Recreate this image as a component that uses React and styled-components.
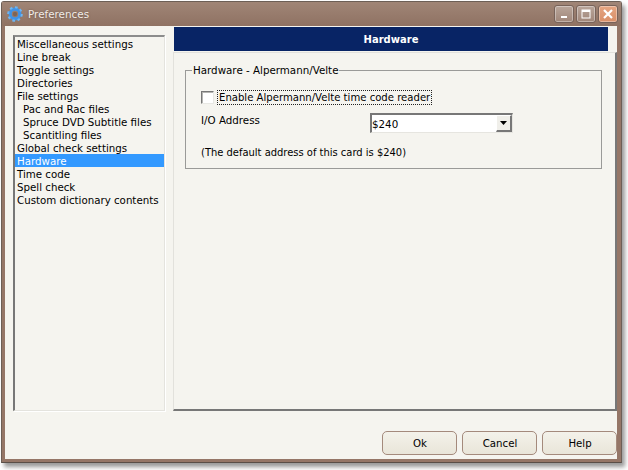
import React from 'react';
import styled, { createGlobalStyle } from 'styled-components';

const Global = createGlobalStyle`
  html, body { margin: 0; padding: 0; background: #fff; overflow: hidden; }
  body { width: 628px; height: 470px; font-family: "DejaVu Sans", sans-serif; }
  * { box-sizing: border-box; }
`;
const Page = styled.div`
  width: 628px; height: 470px; padding: 1px 0 0 1px;
`;
const Window = styled.div`
  width: 621px; height: 462px;
  display: flex; flex-direction: column;
  border: 1px solid #6d5f56;
  border-bottom: 1px solid #5a4f48;
  border-radius: 3px 3px 0 0;
  background: #957667;
  box-shadow: 3px 4px 4px rgba(70,70,70,.55);
`;
const TitleBar = styled.div`
  height: 24px; flex: none;
  display: flex; align-items: center;
  padding: 0 3px 0 5px;
  background: linear-gradient(#a08576, #8f7263);
`;
const AppIcon = styled.svg`width: 16px; height: 16px; flex: none;`;
const Title = styled.div`
  margin-left: 5px; flex: 1;
  font: 10.4px "DejaVu Sans", sans-serif; color: #f1ece8;
  text-shadow: 0 0 2px rgba(60,40,30,.5);
`;
const CaptionBtn = styled.div`
  width: 20px; height: 18px; margin-left: 2px;
  border: 1px solid #78635a; border-radius: 3px;
  display: flex; align-items: center; justify-content: center;
  background: ${p => p.$close ? 'linear-gradient(#e5a582,#d98f68)' : 'linear-gradient(#b9a69b,#a08679)'};
  box-shadow: inset 0 0 0 1px rgba(255,255,255,.35);
`;
const Client = styled.div`
  flex: 1; margin: 0 4px 3px 3px;
  background: #f5f4ef;
  display: flex; flex-direction: column;
  min-height: 0;
`;
const Main = styled.div`
  height: 385px; flex: none;
  display: flex;
`;
const ListBox = styled.ul`
  list-style: none; margin: 9px 0 0 8px; padding: 0;
  width: 152px; height: 376px; flex: none;
  border: 2px solid #8a8a8a;
  border-right: 1px solid #e4e3de; border-bottom: 1px solid #e4e3de;
  border-left-color: #777; border-top-color: #8c8c8c;
  background: #f5f4ef;
  box-shadow: 1px 1px 0 #fff;
`;
const Item = styled.li`
  height: 13px; line-height: 14px; font-size: 10.25px; white-space: nowrap;
  padding-left: ${p => p.$sub ? 8 : 2}px;
  color: ${p => p.$active ? '#fff' : '#000'};
  background: ${p => p.$active ? '#3399ff' : 'transparent'};
`;
const Right = styled.div`
  margin-left: 8px; flex: 1;
  display: flex; flex-direction: column;
  padding-top: 1px;
`;
const Heading = styled.div`
  height: 24px; flex: none; margin: 0 9px 0 1px;
  background: #082465; color: #fff;
  font-weight: bold; font-size: 10px;
  display: flex; align-items: center; justify-content: center;
`;
const Panel = styled.div`
  flex: 1; margin-top: 1px;
  border-left: 1px solid #e2e1dc; border-top: 1px solid #e2e1dc;
  border-right: 2px solid #777; border-bottom: 2px solid #777;
  padding: 17px 13px 0 11px;
`;
const Group = styled.fieldset`
  margin: 0; padding: 0;
  height: 99px;
  border: 1px solid #9a9a98;
  position: relative;
`;
const Legend = styled.div`
  position: absolute; left: 6px; top: -7px;
  background: #f5f4ef; padding: 0 1px 0 1px;
  font-size: 10.3px; line-height: 13px; color: #000;
`;
const GroupBody = styled.div`
  display: flex; flex-direction: column; padding: 19px 0 0 15px;
`;
const CheckRow = styled.label`
  display: flex; align-items: center; height: 15px; font-size: 10.1px;
`;
const Check = styled.span`
  width: 13px; height: 13px; flex: none;
  border: 1px solid #777; border-right-color: #e8e8e4; border-bottom-color: #e8e8e4;
  box-shadow: inset 1px 1px 0 #b5b5b2;
  background: #fff;
`;
const CheckLabel = styled.span`
  margin-left: 3px; padding: 0 1px 0 1px; height: 15px; line-height: 13px;
  border: 1px dotted #222; white-space: nowrap;
`;
const AddressRow = styled.div`
  display: flex; margin-top: 7px; height: 26px;
`;
const AddressLabel = styled.span`
  width: 169px; font-size: 10.3px; line-height: 13px; padding-top: 2px; flex: none;
`;
const Combo = styled.div`
  width: 143px; height: 20px; display: flex;
  border: 2px solid #777; border-right-color: #e6e5e0; border-bottom-color: #e6e5e0;
  background: #fff; border-right-width: 1px; border-bottom-width: 1px;
  font-size: 10.3px; line-height: 18px; padding-left: 0; margin-top: 1px;
`;
const ComboText = styled.span`flex: 1;`;
const ComboBtn = styled.span`
  width: 16px; height: 17px; flex: none;
  background: #f0efea;
  border-right: 2px solid #777; border-bottom: 2px solid #777;
  border-left: 1px solid #fff; border-top: 1px solid #fff;
  display: flex; align-items: center; justify-content: center;
`;
const Note = styled.div`font-size: 9.95px; line-height: 13px; margin-top: 8px; white-space: nowrap;`;
const Footer = styled.div`
  flex: 1; display: flex; justify-content: flex-end; align-items: flex-start;
  gap: 5px; padding: 20px 0 0 0;
`;
const Button = styled.button`
  width: 75px; height: 24px; padding: 0 0 0 1px;
  border: 1px solid #a48a7c; border-radius: 5px;
  background: linear-gradient(#f4f2ea, #e9e5d9);
  font: 10.2px "DejaVu Sans", sans-serif; color: #000;
`;

const Gear = () => (
  <AppIcon viewBox="0 0 16 16">
    <circle cx="8" cy="8" r="4.8" fill="none" stroke="#3f93e8" strokeWidth="3.2" />
    <circle cx="8" cy="8" r="6.8" fill="none" stroke="#6db5f2" strokeWidth="2" strokeDasharray="2.7 2.6" />
    <circle cx="8" cy="8" r="2.2" fill="#7d6558" />
  </AppIcon>
);

const items = [
  ['Miscellaneous settings'], ['Line break'], ['Toggle settings'], ['Directories'], ['File settings'],
  ['Pac and Rac files', 1], ['Spruce DVD Subtitle files', 1], ['Scantitling files', 1],
  ['Global check settings'], ['Hardware', 0, 1], ['Time code'], ['Spell check'], ['Custom dictionary contents'],
];

export default function App() {
  return (
    <Page>
      <Global />
      <Window>
        <TitleBar>
          <Gear />
          <Title>Preferences</Title>
          <CaptionBtn>
            <svg width="10" height="10" viewBox="0 0 10 10"><rect x="2" y="7" width="6" height="2" fill="#fff" /></svg>
          </CaptionBtn>
          <CaptionBtn>
            <svg width="10" height="10" viewBox="0 0 10 10"><rect x="1" y="1" width="8" height="8" fill="none" stroke="#fff" strokeWidth="1" /><rect x="1" y="1" width="8" height="2" fill="#fff" /></svg>
          </CaptionBtn>
          <CaptionBtn $close>
            <svg width="10" height="10" viewBox="0 0 10 10"><path d="M1 1 L9 9 M9 1 L1 9" stroke="#fff" strokeWidth="2.2" /></svg>
          </CaptionBtn>
        </TitleBar>
        <Client>
          <Main>
            <ListBox>
              {items.map(([t, sub, act]) => <Item key={t} $sub={!!sub} $active={!!act}>{t}</Item>)}
            </ListBox>
            <Right>
              <Heading>Hardware</Heading>
              <Panel>
                <Group>
                  <Legend>Hardware - Alpermann/Velte</Legend>
                  <GroupBody>
                    <CheckRow><Check /><CheckLabel>Enable Alpermann/Velte time code reader</CheckLabel></CheckRow>
                    <AddressRow>
                      <AddressLabel>I/O Address</AddressLabel>
                      <Combo>
                        <ComboText>$240</ComboText>
                        <ComboBtn><svg width="8" height="5" viewBox="0 0 8 5"><path d="M0 0 H7 L3.5 4 Z" fill="#000" /></svg></ComboBtn>
                      </Combo>
                    </AddressRow>
                    <Note>(The default address of this card is $240)</Note>
                  </GroupBody>
                </Group>
              </Panel>
            </Right>
          </Main>
          <Footer>
            <Button>Ok</Button>
            <Button>Cancel</Button>
            <Button>Help</Button>
          </Footer>
        </Client>
      </Window>
    </Page>
  );
}
